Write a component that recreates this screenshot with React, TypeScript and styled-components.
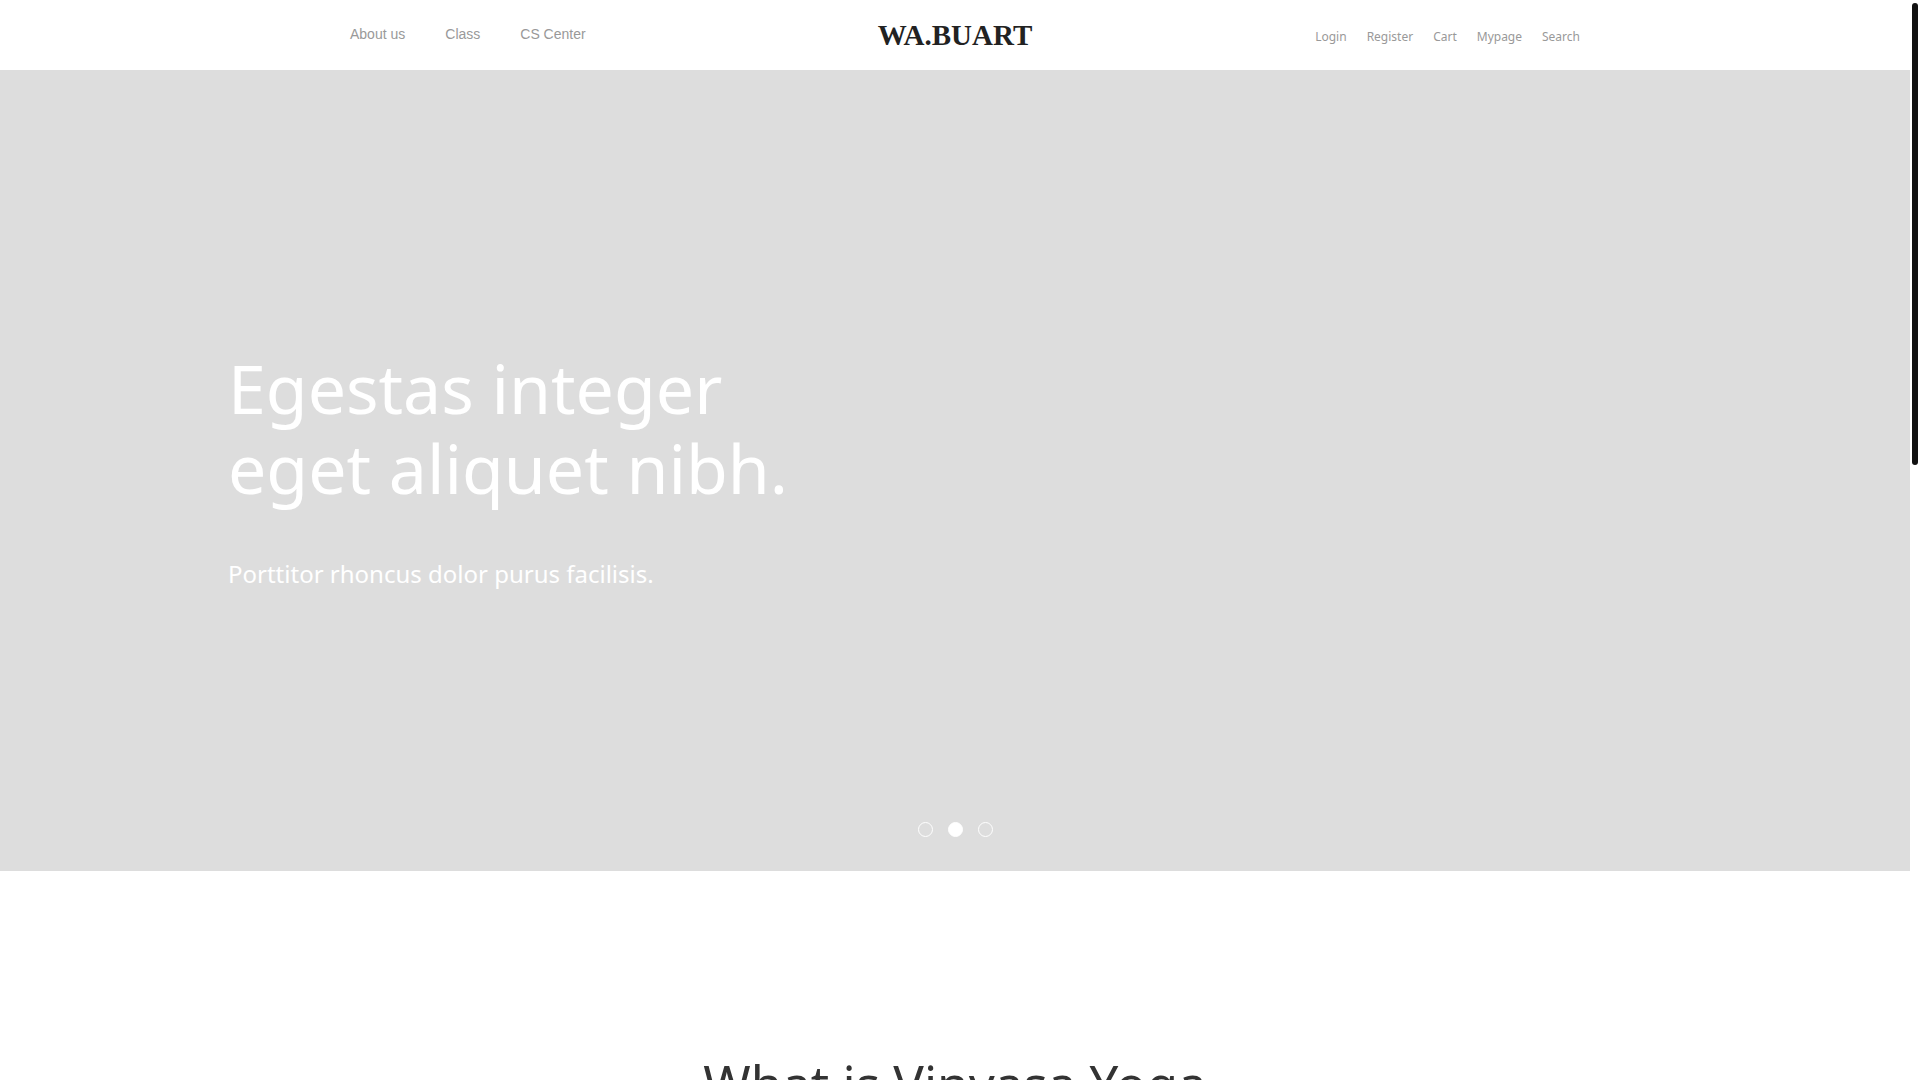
import React, { useEffect, useRef, useState } from "react";
import styled, { createGlobalStyle } from "styled-components";

const GlobalStyle = createGlobalStyle`
  html, body, #root {
    margin: 0;
    padding: 0;
    height: 100%;
  }

  body {
    overflow: hidden;
    background: #fff;
    font-family: "Noto Sans", "Open Sans", sans-serif;
  }
`;

const Frame = styled.div`
  display: flex;
  height: 100vh;
  background: #fff;
`;

const Scroller = styled.div`
  flex: 1;
  min-width: 0;
  overflow-y: scroll;
  scrollbar-width: none;

  &::-webkit-scrollbar {
    display: none;
  }
`;

const Rail = styled.div`
  position: relative;
  width: 10px;
  flex-shrink: 0;
  background: #fff;
`;

const Thumb = styled.div`
  position: absolute;
  left: 2px;
  width: 6px;
  border-radius: 3px;
  background: #111;
`;

const Header = styled.header`
  height: 70px;
  display: grid;
  grid-template-columns: 1fr auto 1fr;
  align-items: center;
  padding: 0 330px;
  background: #fff;
`;

const LeftNav = styled.nav`
  display: flex;
  gap: 40px;
  padding-left: 20px;
  padding-bottom: 2px;
`;

const LeftLink = styled.a`
  font-family: "Liberation Sans", Arial, sans-serif;
  font-size: 14px;
  color: #999;
  text-decoration: none;
  cursor: pointer;
`;

const Logo = styled.a`
  font-family: "Liberation Serif", "Times New Roman", serif;
  font-weight: 700;
  font-size: 29px;
  color: #222;
  text-decoration: none;
`;

const RightNav = styled.nav`
  display: flex;
  justify-content: flex-end;
  gap: 20px;
  padding-top: 3px;
`;

const RightLink = styled.a`
  font-family: "Noto Sans", sans-serif;
  font-size: 12px;
  color: #999;
  text-decoration: none;
  cursor: pointer;
`;

const Hero = styled.section`
  position: relative;
  height: 801px;
  background: #ddd;
  display: flex;
  align-items: center;
  padding-left: 228px;
`;

const HeroText = styled.div`
  color: #fff;
  padding-bottom: 2px;
`;

const HeroTitle = styled.h1`
  margin: 0;
  font-family: "Noto Sans", sans-serif;
  font-weight: 400;
  font-size: 68px;
  line-height: 80px;
`;

const HeroSub = styled.p`
  margin: 48px 0 0;
  font-family: "Noto Sans", sans-serif;
  font-size: 24px;
  line-height: 36px;
`;

const Dots = styled.div`
  position: absolute;
  left: 0;
  right: 0;
  bottom: 34px;
  display: flex;
  justify-content: center;
  gap: 15px;
`;

const Dot = styled.button<{ $active?: boolean }>`
  width: 15px;
  height: 15px;
  padding: 0;
  border-radius: 50%;
  border: 1.5px solid #fff;
  background: ${(p) => (p.$active ? "#fff" : "transparent")};
  cursor: pointer;
`;

const Intro = styled.section`
  padding: 182px 0 200px;
  text-align: center;
`;

const IntroTitle = styled.h2`
  margin: 0;
  font-family: "Noto Sans", sans-serif;
  font-weight: 400;
  font-size: 51px;
  line-height: 60px;
  color: #333;
`;

const IntroText = styled.p`
  width: 760px;
  margin: 40px auto 0;
  font-family: "Noto Sans", sans-serif;
  font-size: 15px;
  line-height: 28px;
  color: #888;
`;

const Cards = styled.div`
  display: grid;
  grid-template-columns: repeat(3, 380px);
  justify-content: center;
  gap: 30px;
  margin-top: 80px;
`;

const Card = styled.div`
  height: 420px;
  background: #eee;
`;

const Footer = styled.footer`
  height: 600px;
  background: #f5f5f5;
`;

const leftLinks = ["About us", "Class", "CS Center"];
const rightLinks = ["Login", "Register", "Cart", "Mypage", "Search"];

const App: React.FC = () => {
  const [slide, setSlide] = useState(1);
  const [thumb, setThumb] = useState({ top: 3, height: 0 });
  const scrollRef = useRef<HTMLDivElement>(null);

  const updateThumb = () => {
    const el = scrollRef.current;
    if (!el) return;
    const track = el.clientHeight - 6;
    const height = Math.max(30, (el.clientHeight / el.scrollHeight) * track);
    const max = el.scrollHeight - el.clientHeight;
    const top = 3 + (max > 0 ? (el.scrollTop / max) * (track - height) : 0);
    setThumb({ top, height });
  };

  useEffect(() => {
    updateThumb();
    window.addEventListener("resize", updateThumb);
    return () => window.removeEventListener("resize", updateThumb);
  }, []);

  return (
    <Frame>
      <GlobalStyle />
      <Scroller ref={scrollRef} onScroll={updateThumb}>
        <Header>
          <LeftNav>
            {leftLinks.map((l) => (
              <LeftLink key={l}>{l}</LeftLink>
            ))}
          </LeftNav>
          <Logo>WA.BUART</Logo>
          <RightNav>
            {rightLinks.map((l) => (
              <RightLink key={l}>{l}</RightLink>
            ))}
          </RightNav>
        </Header>
        <Hero>
          <HeroText>
            <HeroTitle>
              Egestas integer
              <br />
              eget aliquet nibh.
            </HeroTitle>
            <HeroSub>Porttitor rhoncus dolor purus facilisis.</HeroSub>
          </HeroText>
          <Dots>
            {[0, 1, 2].map((i) => (
              <Dot key={i} $active={slide === i} onClick={() => setSlide(i)} />
            ))}
          </Dots>
        </Hero>
        <Intro>
          <IntroTitle>What is Vinyasa Yoga</IntroTitle>
          <IntroText>
            Lorem ipsum dolor sit amet, consectetur adipiscing elit, sed do
            eiusmod tempor incididunt ut labore et dolore magna aliqua. Ut enim
            ad minim veniam, quis nostrud exercitation ullamco laboris.
          </IntroText>
          <Cards>
            <Card />
            <Card />
            <Card />
          </Cards>
        </Intro>
        <Footer />
      </Scroller>
      <Rail>
        <Thumb style={{ top: thumb.top, height: thumb.height }} />
      </Rail>
    </Frame>
  );
};

export default App;
